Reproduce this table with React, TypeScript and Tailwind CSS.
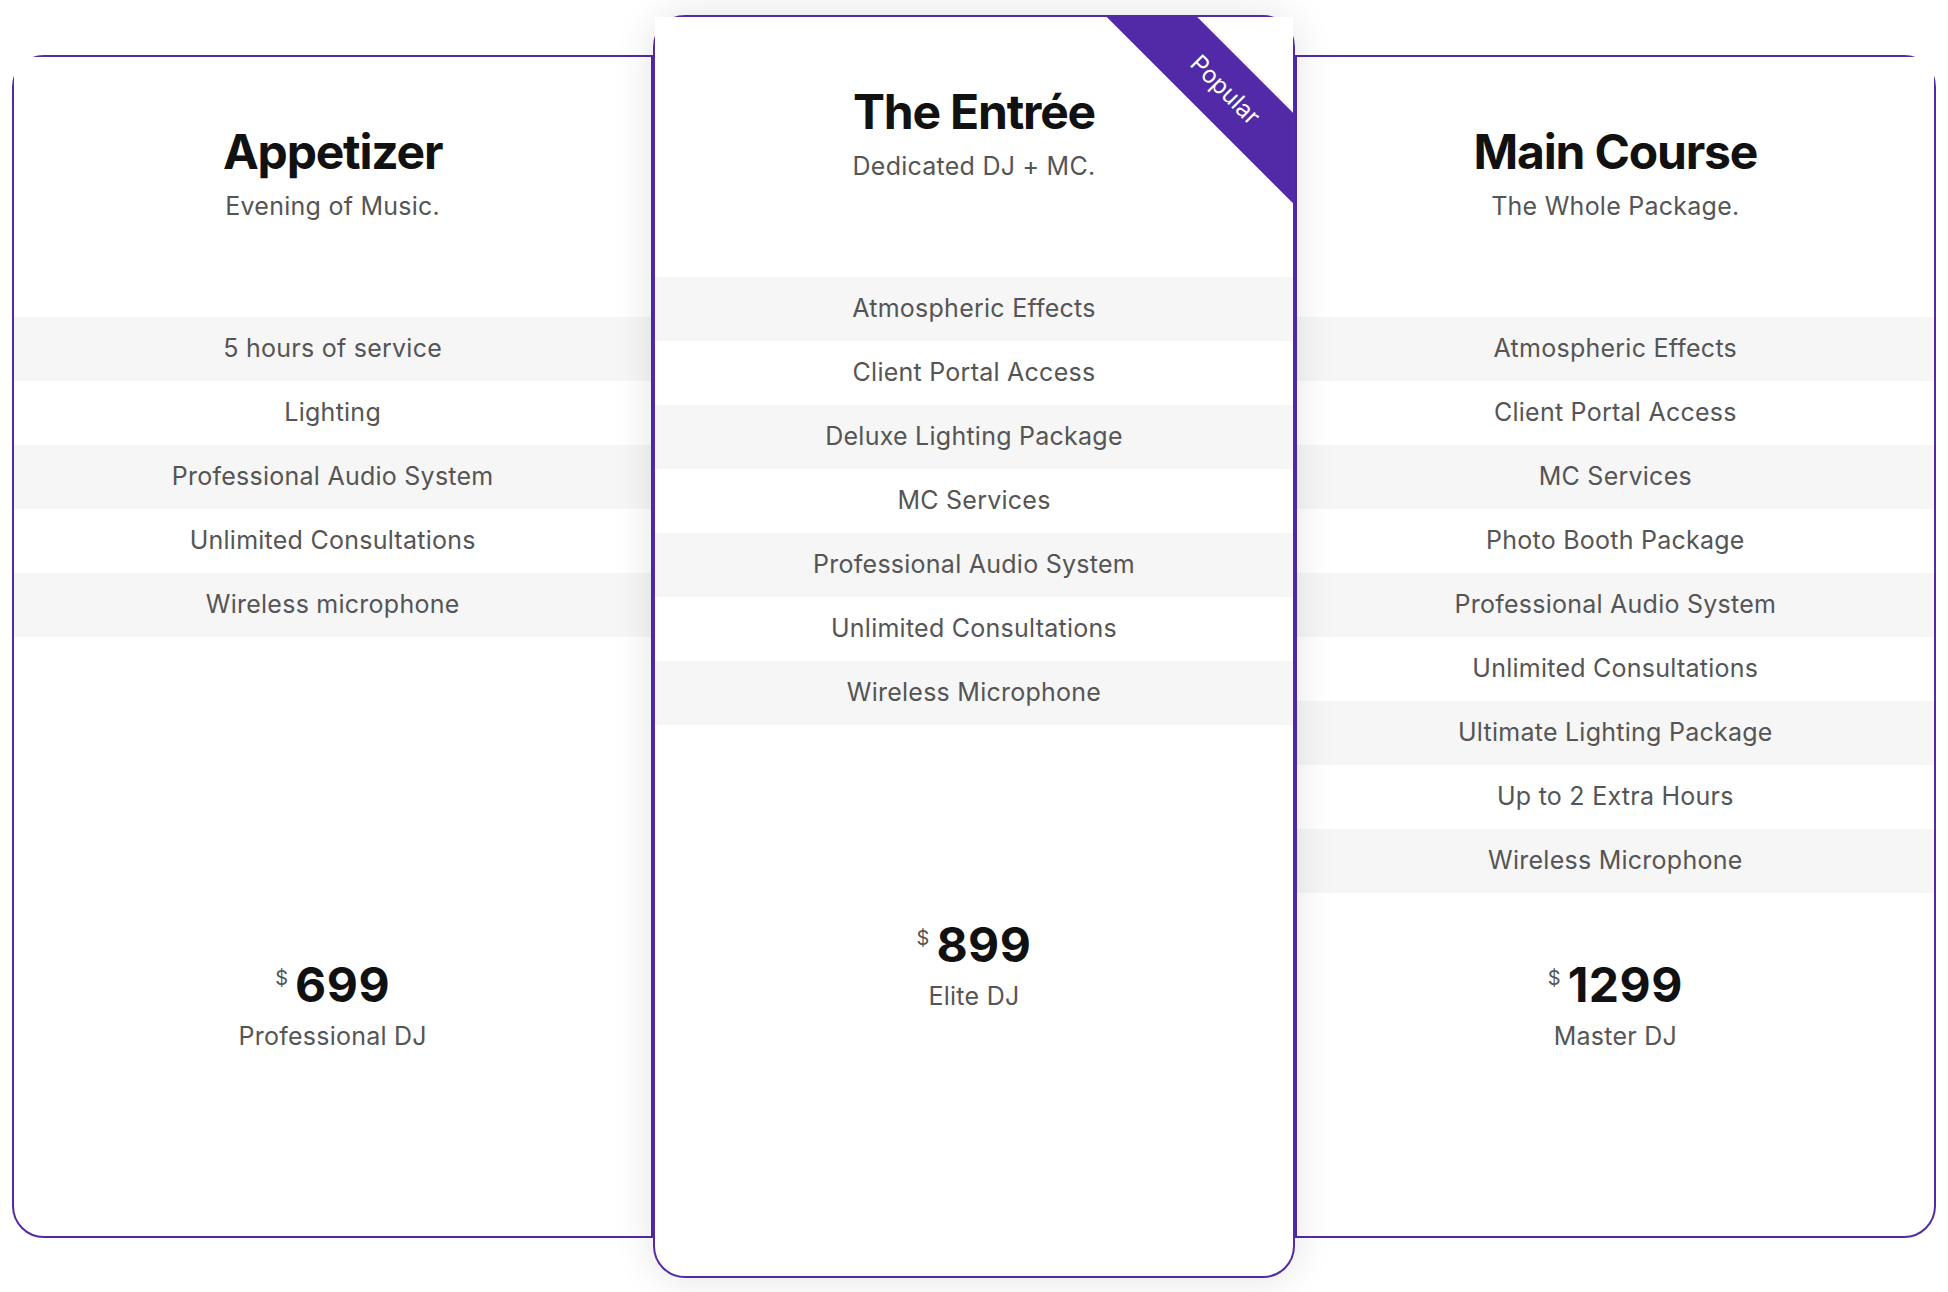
import React from 'react';

type Plan = {
  name: string;
  tagline: string;
  features: string[];
  price: string;
  tier: string;
  popular?: boolean;
};

const plans: Plan[] = [
  {
    name: 'Appetizer',
    tagline: 'Evening of Music.',
    features: [
      '5 hours of service',
      'Lighting',
      'Professional Audio System',
      'Unlimited Consultations',
      'Wireless microphone',
    ],
    price: '699',
    tier: 'Professional DJ',
  },
  {
    name: 'The Entrée',
    tagline: 'Dedicated DJ + MC.',
    features: [
      'Atmospheric Effects',
      'Client Portal Access',
      'Deluxe Lighting Package',
      'MC Services',
      'Professional Audio System',
      'Unlimited Consultations',
      'Wireless Microphone',
    ],
    price: '899',
    tier: 'Elite DJ',
    popular: true,
  },
  {
    name: 'Main Course',
    tagline: 'The Whole Package.',
    features: [
      'Atmospheric Effects',
      'Client Portal Access',
      'MC Services',
      'Photo Booth Package',
      'Professional Audio System',
      'Unlimited Consultations',
      'Ultimate Lighting Package',
      'Up to 2 Extra Hours',
      'Wireless Microphone',
    ],
    price: '1299',
    tier: 'Master DJ',
  },
];

const cardStyles = [
  'relative h-[1183px] rounded-l-[32px] border-2 border-[#522aa8] bg-white',
  'relative z-10 h-[1263px] rounded-[32px] border-2 border-[#522aa8] bg-white shadow-[0_0_40px_rgba(0,0,0,0.12)]',
  'relative h-[1183px] rounded-r-[32px] border-2 border-[#522aa8] bg-white',
];

const PlanCard = ({ plan, index }: { plan: Plan; index: number }) => {
  return (
    <div className={cardStyles[index]}>
      {/* square header paints over the rounded top corners */}
      <div className="relative h-[260px] overflow-hidden bg-white pt-[71px] text-center">
        {plan.popular && (
          <div className="absolute right-[-82px] top-[41px] flex h-[64px] w-[300px] rotate-45 items-center justify-center bg-[#522aa8] text-[24px] leading-none text-white">
            Popular
          </div>
        )}
        <h2 className="text-[48px] font-bold leading-none tracking-[-0.025em] text-[#111]">{plan.name}</h2>
        <p className="mt-[18px] text-[25px] leading-none tracking-[0.01em] text-[#555]">{plan.tagline}</p>
      </div>

      <ul className="h-[644px]">
        {plan.features.map((f, i) => (
          <li
            key={f}
            className={`flex h-[64px] items-center justify-center text-[25px] tracking-[0.01em] text-[#555] ${
              i % 2 === 0 ? 'bg-[#f6f6f6]' : 'bg-white'
            }`}
          >
            {f}
          </li>
        ))}
      </ul>

      <div className="flex flex-col items-center">
        <div className="flex items-start gap-[7px]">
          <span className="mt-[7px] text-[20px] leading-none text-[#555]">$</span>
          <span className="text-[48px] font-bold leading-none tracking-[0.01em] text-[#111]">{plan.price}</span>
        </div>
        <p className="mt-[15px] text-[25px] leading-none tracking-[0.01em] text-[#555]">{plan.tier}</p>
      </div>
    </div>
  );
};

export default function App() {
  return (
    <div className="min-h-screen bg-white font-['Inter',sans-serif]">
      <div className="grid grid-cols-3 items-center px-3 pt-[15px]">
        {plans.map((p, i) => (
          <PlanCard key={p.name} plan={p} index={i} />
        ))}
      </div>
    </div>
  );
}
